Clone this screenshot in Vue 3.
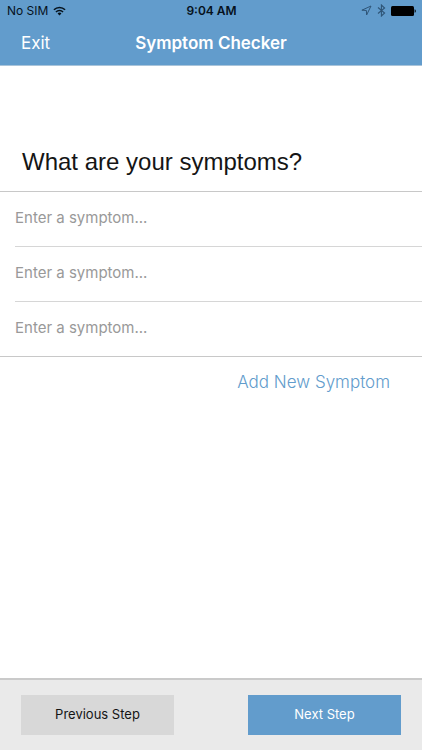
<template>
  <div class="checker">
    <header class="checker-header">
      <div class="status-bar">
        <div class="status-left">
          <span>No SIM</span>
          <svg width="13" height="10" viewBox="0 0 14 10" aria-hidden="true">
            <g fill="none" stroke="#06121c" stroke-width="1.7">
              <path d="M1 3.7a8.5 8.5 0 0 1 12 0" />
              <path d="M3.2 6a5.3 5.3 0 0 1 7.6 0" />
            </g>
            <path d="M4.9 7.6a3 3 0 0 1 4.2 0L7 9.8z" fill="#06121c" />
          </svg>
        </div>
        <span class="status-time">9:04 AM</span>
        <div class="status-right">
          <svg width="11" height="11" viewBox="0 0 11 11" aria-hidden="true">
            <path d="M10 1 .9 5.2l4.5.3.2 4.5z" fill="none" stroke="#2f5577" stroke-width="1" stroke-linejoin="round" />
          </svg>
          <svg width="9" height="13" viewBox="0 0 9 13" aria-hidden="true">
            <path d="M1 3.5 7.6 9 4.4 12V1l3.2 3L1 9.5" fill="none" stroke="#2f5577" stroke-width="1.1" />
          </svg>
          <svg width="25" height="10" viewBox="0 0 25 10" aria-hidden="true">
            <rect width="23" height="10" rx="1.5" fill="#000" />
            <path d="M23.6 3.2c1.6.3 1.6 3.3 0 3.6z" fill="#000" />
          </svg>
        </div>
      </div>
      <nav class="nav-bar">
        <button type="button" class="nav-exit">Exit</button>
        <h1 class="nav-title">Symptom Checker</h1>
      </nav>
    </header>

    <main class="checker-main">
      <h2 class="question">What are your symptoms?</h2>
      <ul class="symptom-list">
        <li v-for="(symptom, index) in symptoms" :key="index" class="symptom-row">
          <input
            v-model="symptoms[index]"
            class="symptom-input"
            type="text"
            placeholder="Enter a symptom..."
            :aria-label="'Symptom ' + (index + 1)"
          />
        </li>
      </ul>
      <button type="button" class="add-symptom" @click="addSymptom">Add New Symptom</button>
    </main>

    <footer class="checker-footer">
      <button type="button" class="step-button">Previous Step</button>
      <button type="button" class="step-button step-next">Next Step</button>
    </footer>
  </div>
</template>

<script setup>
  import { ref } from 'vue'

  // one entry per input row
  const symptoms = ref(['', '', ''])

  const addSymptom = () => {
    symptoms.value.push('')
  }
</script>

<style>
  body {
    margin: 0;
    background: #fff;
  }
</style>

<style scoped>
  .checker {
    display: flex;
    flex-direction: column;
    min-height: 100vh;
    font-family: Inter, "Liberation Sans", sans-serif;
    color: #151515;
  }

  button {
    padding: 0;
    border: 0;
    background: none;
    font-family: inherit;
    cursor: pointer;
  }

  .checker-header {
    background: #629ccc;
    border-bottom: 1px solid #a9c4da;
  }

  .status-bar {
    display: grid;
    grid-template-columns: 1fr auto 1fr;
    align-items: center;
    height: 21px;
    padding: 0 6px 0 7px;
    font-size: 12px;
    color: #06121c;
  }
  .status-left,
  .status-right {
    display: flex;
    align-items: center;
    gap: 5px;
  }
  .status-right {
    justify-content: flex-end;
  }
  .status-time {
    font-weight: 600;
  }

  .nav-bar {
    display: grid;
    grid-template-columns: 1fr auto 1fr;
    align-items: center;
    height: 44px;
    padding: 0 21px;
    color: #fff;
  }
  .nav-exit {
    justify-self: start;
    font-size: 17px;
    color: inherit;
  }
  .nav-title {
    margin: 0;
    font-size: 17px;
    font-weight: 600;
  }

  .checker-main {
    display: flex;
    flex: 1;
    flex-direction: column;
  }
  .question {
    margin: 80px 22px 13px;
    font-family: "Liberation Sans", Arial, sans-serif;
    font-size: 24px;
    font-weight: 400;
    line-height: 32px;
  }

  .symptom-list {
    margin: 0;
    padding: 0 0 0 15px;
    border-top: 1px solid #c8c8c8;
    border-bottom: 1px solid #c8c8c8;
    list-style: none;
  }
  .symptom-row + .symptom-row {
    border-top: 1px solid #d6d6d6;
  }
  .symptom-input {
    display: block;
    box-sizing: border-box;
    width: 100%;
    height: 54px;
    padding: 0 15px 4px 0;
    border: 0;
    outline: 0;
    background: none;
    font-family: inherit;
    font-size: 15px;
    color: inherit;
  }
  .symptom-input::placeholder {
    color: #999;
    opacity: 1;
  }

  .add-symptom {
    align-self: flex-end;
    margin: 14px 32px;
    font-size: 17px;
    font-weight: 300;
    line-height: 22px;
    color: #629ccc;
  }

  .checker-footer {
    display: flex;
    justify-content: space-between;
    gap: 20px;
    padding: 15px 21px;
    border-top: 2px solid #cacaca;
    background: #eaeaea;
  }
  .step-button {
    flex: 0 1 153px;
    height: 40px;
    padding-bottom: 3px;
    background: #d8d8d8;
    font-size: 13px;
    color: #151515;
  }
  .step-next {
    background: #629ccc;
    color: #fff;
  }
</style>
